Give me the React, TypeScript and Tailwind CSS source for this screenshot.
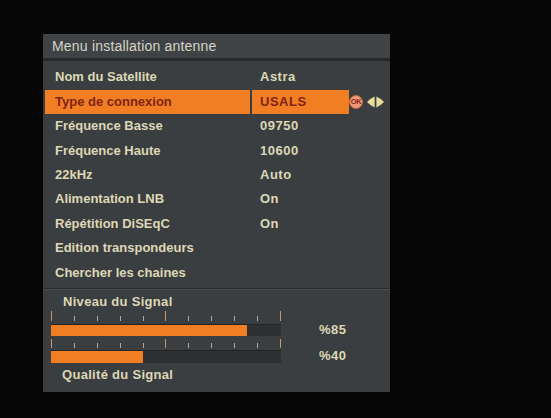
import React from "react";

const rows: { label: string; value: string; active?: boolean }[] = [
  { label: "Nom du Satellite", value: "Astra" },
  { label: "Type de connexion", value: "USALS", active: true },
  { label: "Fréquence Basse", value: "09750" },
  { label: "Fréquence Haute", value: "10600" },
  { label: "22kHz", value: "Auto" },
  { label: "Alimentation LNB", value: "On" },
  { label: "Répétition DiSEqC", value: "On" },
  { label: "Edition transpondeurs", value: "" },
  { label: "Chercher les chaines", value: "" },
];

function Ticks({ tall, small }: { tall: string; small: string }) {
  return (
    <div className={`flex justify-between items-end ${tall}`}>
      {Array.from({ length: 11 }).map((_, i) => (
        <div
          key={i}
          className={`w-px ${i === 0 || i === 5 || i === 10 ? `${tall} bg-[#c9956a]` : `${small} bg-[#b8a88a]`}`}
        />
      ))}
    </div>
  );
}

function Bar({ pct, h }: { pct: number; h: string }) {
  return (
    <div className={`w-[230px] ${h} bg-[#2d2f30] border-t border-[#242526] flex`}>
      <div className="h-full bg-[#f27e24]" style={{ width: `${pct}%` }} />
    </div>
  );
}

export default function App() {
  return (
    <div
      className="w-[551px] h-[418px] bg-[#060606] overflow-hidden pt-[34px] pl-[43px]"
      style={{ fontFamily: '"Liberation Sans", Arial, sans-serif' }}
    >
      <div className="w-[347px] h-[358px] bg-[#3b3e40] flex flex-col">
        <div className="h-[24px] bg-[#404345] flex items-center pl-[9px] text-[14px] tracking-[0.2px] text-[#d6d4c8]">
          Menu installation antenne
        </div>
        <div className="h-[3px] bg-[#27292a]" />
        <div className="pt-[4px] flex flex-col">
          {rows.map((r) => (
            <div key={r.label} className="h-[24.4px] flex items-center text-[13px] font-bold">
              <div
                className={`ml-[2px] w-[205px] h-[24px] flex items-center pl-[10px] ${
                  r.active ? "bg-[#f27e24] text-[#7e2412]" : "text-[#dcd8b6]"
                }`}
              >
                {r.label}
              </div>
              <div
                className={`ml-[2px] w-[97px] h-[24px] flex items-center pl-[8px] tracking-[0.5px] ${
                  r.active ? "bg-[#f27e24] text-[#7e2412]" : "text-[#dcd8b6]"
                }`}
              >
                {r.value}
              </div>
              {r.active && (
                <div className="flex items-center">
                  <div className="w-[14px] h-[14px] rounded-full bg-[#ec9a78] border border-[#c8643c] flex items-center justify-center text-[7.5px] font-bold text-[#8a2412] leading-none tracking-[-0.3px]">
                    OK
                  </div>
                  <svg width="19" height="12" viewBox="0 0 19 12" className="ml-[3px]">
                    <path d="M8.6,0.5 L8.6,11.5 Q5,10 1,6 Q5,2 8.6,0.5 Z" fill="#e6dd9a" />
                    <path d="M10.4,0.5 L10.4,11.5 Q14,10 18,6 Q14,2 10.4,0.5 Z" fill="#e6dd9a" />
                  </svg>
                </div>
              )}
            </div>
          ))}
        </div>
        <div className="mt-[3px] h-px bg-[#2a2c2d]" />
        <div className="h-px bg-[#4a4d4f]" />
        <div className="pl-[8px] flex flex-col text-[13px] font-bold text-[#dcd8b6]">
          <div className="mt-[5px] h-[14px] leading-[14px] pl-[12px] tracking-[0.3px]">Niveau du Signal</div>
          <div className="flex items-end">
            <div className="flex flex-col w-[230px]">
              <div className="mt-[2px]">
                <Ticks tall="h-[10px]" small="h-[5px]" />
              </div>
              <div className="mt-[3px]">
                <Bar pct={85} h="h-[12px]" />
              </div>
            </div>
            <div className="ml-[38px] h-[12px] flex items-center tracking-[0.5px]">%85</div>
          </div>
          <div className="flex items-end">
            <div className="flex flex-col w-[230px]">
              <div className="mt-[3px]">
                <Ticks tall="h-[9px]" small="h-[5px]" />
              </div>
              <div className="mt-[2px]">
                <Bar pct={40} h="h-[13px]" />
              </div>
            </div>
            <div className="ml-[38px] h-[13px] flex items-center tracking-[0.5px]">%40</div>
          </div>
          <div className="mt-[5px] h-[14px] leading-[14px] pl-[11px] tracking-[0.3px]">Qualité du Signal</div>
        </div>
      </div>
    </div>
  );
}
